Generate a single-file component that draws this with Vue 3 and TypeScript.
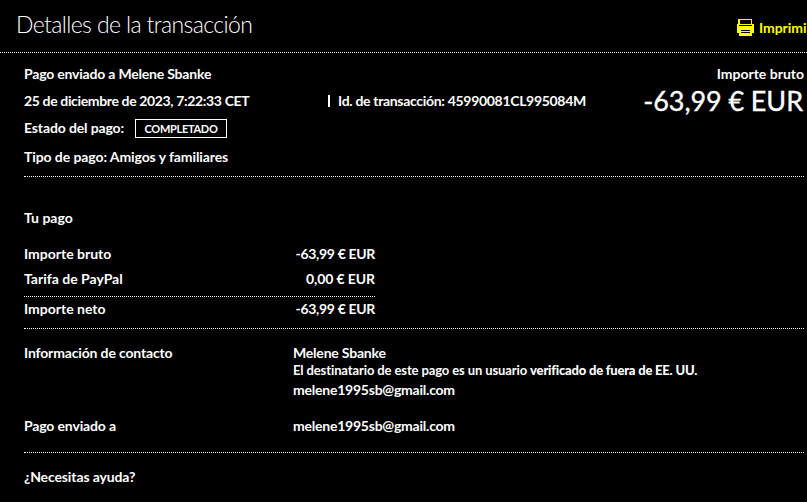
<template>
  <div class="page">
    <header class="page-header">
      <h1 class="title">Detalles de la transacción</h1>
      <a class="print">
        <svg class="print-icon" width="17" height="17" viewBox="0 0 17 17">
          <path d="M1 0h14v5h2v9h-2v3H2v-3H0V5h1z" fill="#ff0" />
          <path d="M3 1h11v4H3zM2 6h13v1H2zM4 11h9v1H4zM4 13h9v1H4z" fill="#000" />
        </svg>
        <span class="print-label">Imprimi</span>
      </a>
    </header>

    <main class="content">
      <section class="summary">
        <div class="summary-info">
          <div class="line recipient">Pago enviado a Melene Sbanke</div>
          <div class="line date-line">
            <span class="date">25 de diciembre de 2023, 7:22:33 CET</span>
            <span class="divider"></span>
            <span class="transaction-id">Id. de transacción: 45990081CL995084M</span>
          </div>
          <div class="line status-line">
            <span class="status-label">Estado del pago:</span>
            <span class="badge"><span>COMPLETADO</span></span>
          </div>
          <div class="line payment-type">Tipo de pago: Amigos y familiares</div>
        </div>
        <div class="gross">
          <div class="gross-label">Importe bruto</div>
          <div class="gross-amount">-63,99 € EUR</div>
        </div>
      </section>

      <section class="payment">
        <h2 class="heading">Tu pago</h2>
        <div v-for="row in amounts" :key="row.label" class="amount-row" :class="row.kind">
          <span class="amount-label">{{ row.label }}</span>
          <span class="amount">{{ row.value }}</span>
        </div>
      </section>

      <section class="contact">
        <div class="contact-row contact-info">
          <span class="contact-label">Información de contacto</span>
          <div>
            <div class="contact-name">Melene Sbanke</div>
            <div class="contact-note">
              <span class="note-text">El destinatario de este pago es un usuario&nbsp;</span><strong class="verified">verificado de fuera de EE. UU.</strong>
            </div>
            <div class="email">{{ email }}</div>
          </div>
        </div>
        <div class="contact-row">
          <span class="contact-label">Pago enviado a</span>
          <span class="email">{{ email }}</span>
        </div>
      </section>

      <div class="help">¿Necesitas ayuda?</div>
    </main>
  </div>
</template>

<script setup lang="ts">
interface AmountRow {
  label: string;
  value: string;
  kind: string;
}

const email = 'melene1995sb@gmail.com';

const amounts: AmountRow[] = [
  { label: 'Importe bruto', value: '-63,99 € EUR', kind: 'gross-row' },
  { label: 'Tarifa de PayPal', value: '0,00 € EUR', kind: 'fee-row' },
  { label: 'Importe neto', value: '-63,99 € EUR', kind: 'net-row' },
];
</script>

<style>
body {
  margin: 0;
  background: #000;
}
</style>

<style scoped>
.page {
  width: 807px;
  height: 502px;
  overflow: hidden;
  background: #000;
  color: #fff;
  font: 700 14px/20px Lato, sans-serif;
  white-space: nowrap;
}

.page * {
  box-sizing: border-box;
}

.page-header {
  display: flex;
  height: 53px;
  padding-left: 16px;
  border-bottom: 1px dotted #fff;
}

.title {
  width: 721px;
  flex: none;
  margin: 0;
  padding-top: 9px;
  font-size: 23px;
  font-weight: 300;
  line-height: 30px;
  letter-spacing: -0.62px;
}

.print {
  display: flex;
  flex: none;
  padding-top: 18px;
  color: #ff0;
}

.print-icon {
  margin: 1px 5px 0 0;
}

.print-label {
  letter-spacing: -0.05px;
}

.content {
  padding: 0 3px 0 24px;
}

.summary {
  display: flex;
  justify-content: space-between;
  height: 124px;
  padding-top: 11px;
  border-bottom: 1px dotted #fff;
}

.line {
  display: flex;
  height: 27px;
}

.recipient {
  letter-spacing: -0.2px;
}

.status-line {
  height: 29px;
}

.date {
  width: 304px;
  letter-spacing: -0.36px;
}

.divider {
  width: 2px;
  height: 12px;
  margin: 4px 8px 0 0;
  background: #fff;
}

.transaction-id {
  letter-spacing: -0.31px;
}

.status-label {
  width: 111px;
  letter-spacing: -0.13px;
}

.badge {
  display: flex;
  justify-content: center;
  width: 92px;
  height: 19px;
  margin-top: 1px;
  border: 1px solid #fff;
  font-size: 11px;
  line-height: 18px;
  letter-spacing: -0.3px;
}

.payment-type {
  letter-spacing: -0.09px;
}

.gross {
  text-align: right;
}

.gross-amount {
  padding-right: 1px;
  font-size: 27px;
  font-weight: 400;
  line-height: 34px;
  letter-spacing: -0.08px;
  -webkit-text-stroke: 0.35px #fff;
}

.payment {
  height: 152px;
  padding-top: 31px;
  border-bottom: 1px dotted #fff;
}

.heading {
  margin: 0 0 16px;
  font-size: 14px;
}

.amount-row {
  display: flex;
  justify-content: space-between;
  width: 351px;
  height: 25px;
}

.amount {
  letter-spacing: -0.33px;
}

.fee-row {
  height: 28px;
  border-bottom: 1px dotted #fff;
}

.fee-row .amount {
  letter-spacing: -0.1px;
}

.net-row {
  padding-top: 2px;
}

.contact {
  height: 124px;
  padding-top: 14px;
  border-bottom: 1px dotted #fff;
}

.contact-row {
  display: grid;
  grid-template-columns: 269px 1fr;
}

.contact-info {
  height: 73px;
}

.contact-label {
  letter-spacing: -0.15px;
}

.contact-name {
  height: 17px;
  letter-spacing: -0.2px;
}

.contact-note {
  display: flex;
  font-size: 13px;
}

.note-text {
  letter-spacing: -0.11px;
}

.verified {
  letter-spacing: -0.2px;
}

.email {
  letter-spacing: -0.23px;
}

.help {
  padding-top: 14px;
  letter-spacing: -0.12px;
}
</style>
